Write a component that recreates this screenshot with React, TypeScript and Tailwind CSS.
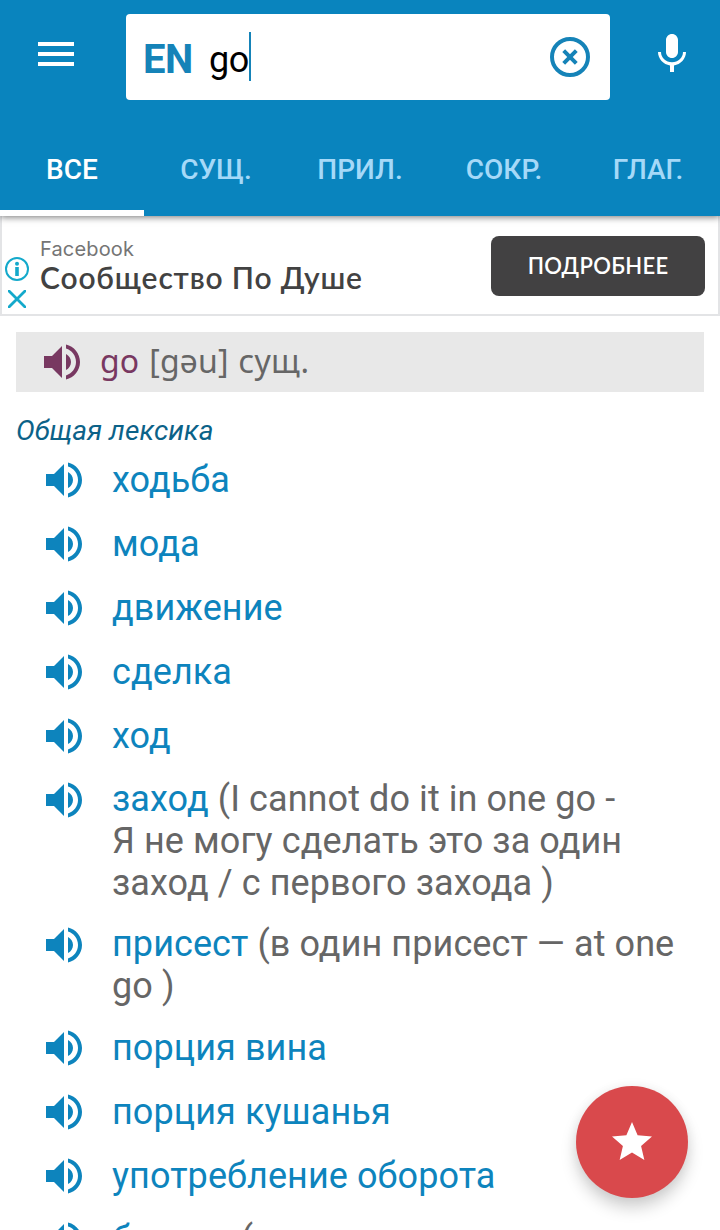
import { useState } from "react";
import { clsx } from "clsx";

interface Translation {
  word: string;
  note?: string;
}

const tabs = ["ВСЕ", "СУЩ.", "ПРИЛ.", "СОКР.", "ГЛАГ."];

const translations: Translation[] = [
  { word: "ходьба" },
  { word: "мода" },
  { word: "движение" },
  { word: "сделка" },
  { word: "ход" },
  {
    word: "заход",
    note: "(I cannot do it in one go -\nЯ не могу сделать это за один заход / с первого захода )",
  },
  { word: "присест", note: "(в один присест — at one go )" },
  { word: "порция вина" },
  { word: "порция кушанья" },
  { word: "употребление оборота" },
  { word: "бросок", note: "(в азартных играх, на скачках )" },
];

export default function App() {
  return (
    <main className="relative flex h-[1230px] w-[720px] flex-col overflow-hidden bg-white font-['Roboto','Noto_Sans',sans-serif]">
      <Header />
      <AdBanner />
      <WordHeading />
      <section className="mt-4 px-4">
        <h2 className="h-[40px] text-[28px] leading-[46px] tracking-[0.1px] text-[#0b6288] italic">
          Общая лексика
        </h2>
        <ul>
          {translations.map((item) => (
            <TranslationRow key={item.word} item={item} />
          ))}
        </ul>
      </section>
      <button
        aria-label="Add to favorites"
        className="absolute top-[1086px] left-[576px] flex size-28 items-center justify-center rounded-full bg-[#d9494c] shadow-[0_10px_16px_rgba(0,0,0,0.18),0_0_12px_rgba(0,0,0,0.06)]"
      >
        <svg viewBox="0 0 24 24" className="size-12 fill-white">
          <path d="M12 17.27L18.18 21l-1.64-7.03L22 9.24l-7.19-.61L12 2 9.19 8.63 2 9.24l5.46 4.73L5.82 21z" />
        </svg>
      </button>
    </main>
  );
}

function Header() {
  const [active, setActive] = useState(0);

  return (
    <header className="relative z-10 h-[216px] shrink-0 bg-[#0984be] shadow-[0_1px_7px_rgba(0,0,0,0.55)]">
      <div className="flex h-[122px] items-start pt-[14px]">
        <button aria-label="Menu" className="mt-7 ml-[38px] flex w-9 flex-col gap-[6px]">
          <span className="h-1 w-full bg-white" />
          <span className="h-1 w-full bg-white" />
          <span className="h-1 w-full bg-white" />
        </button>
        <div className="ml-[52px] flex h-[86px] w-[484px] items-center rounded-[4px] bg-white pr-5 pl-[17px]">
          <span className="mt-[5px] w-[49px] text-[40px] leading-[48px] font-bold tracking-[-0.4px] text-[#1583b8]">
            EN
          </span>
          <span className="mt-[5px] ml-[17px] w-[40px] text-[36px] leading-[48px] tracking-[-0.4px] text-black">
            go
          </span>
          <span className="-mt-px h-[49px] w-[2px] bg-[#1583b8]" />
          <button aria-label="Clear" className="ml-auto">
            <svg viewBox="0 0 40 40" className="size-10 fill-none stroke-[#1583b8]">
              <circle cx="20" cy="20" r="18" strokeWidth="4" />
              <path d="M13.7 13.7l12.6 12.6M26.3 13.7L13.7 26.3" strokeWidth="4" />
            </svg>
          </button>
        </div>
        <button aria-label="Voice search" className="mt-4 ml-[38px]">
          <svg viewBox="0 0 24 24" className="size-12 fill-white">
            <path d="M12 14c1.66 0 3-1.34 3-3V5c0-1.66-1.34-3-3-3S9 3.34 9 5v6c0 1.66 1.34 3 3 3zM17.5 11c0 3-2.44 5.1-5.5 5.1S6.5 14 6.5 11H5c0 3.41 2.72 6.23 6 6.72V21h2v-3.28c3.28-.48 6-3.3 6-6.72h-1.5z" />
          </svg>
        </button>
      </div>
      <nav className="grid h-[94px] grid-cols-5">
        {tabs.map((tab, i) => (
          <button
            key={tab}
            onClick={() => setActive(i)}
            className={clsx(
              "border-b-[6px] pt-2 text-[28px] font-medium",
              i === active ? "border-white text-white" : "border-transparent text-[#a5d9f8]"
            )}
          >
            {tab}
          </button>
        ))}
      </nav>
    </header>
  );
}

function AdBanner() {
  return (
    <aside className="flex h-[100px] shrink-0 items-center border-2 border-t-0 border-[#e3e4e6] pr-[13px] pl-[3px] font-['Lato','Noto_Sans',sans-serif]">
      <div className="mt-[34px] flex w-6 flex-col items-center gap-[9px]">
        <svg viewBox="0 0 24 24" className="size-6 fill-none stroke-[#14a9cb]">
          <circle cx="12" cy="12" r="11" strokeWidth="2" />
          <path d="M12 10v9" strokeWidth="3.6" />
          <circle cx="12" cy="6.8" r="2" className="fill-[#14a9cb] stroke-none" />
        </svg>
        <svg viewBox="0 0 18 18" className="size-[18px] fill-none stroke-[#14a9cb]">
          <path d="M0 0l18 18M18 0L0 18" strokeWidth="2.8" />
        </svg>
      </div>
      <div className="ml-[11px] flex flex-col">
        <span className="font-['Inter',sans-serif] text-[20px] leading-[24px] tracking-[0.15px] text-[#757575]">
          Facebook
        </span>
        <span className="text-[30px] leading-[33px] font-semibold tracking-[0.83px] text-[#424242]">
          Сообщество По Душе
        </span>
      </div>
      <button className="mt-[2px] ml-auto h-[60px] w-[214px] rounded-lg bg-[#424142] pb-px text-[22px] font-semibold tracking-[0.3px] text-white">
        ПОДРОБНЕЕ
      </button>
    </aside>
  );
}

function WordHeading() {
  return (
    <div className="mx-4 mt-4 flex h-[60px] shrink-0 items-center bg-[#e8e8e8] pl-[22px] font-['Noto_Sans',sans-serif] text-[32px] text-[#666]">
      <SpeakerIcon className="fill-[#783861]" />
      <p className="mb-[2px] ml-[14px] tracking-[0.15px] whitespace-pre [word-spacing:1.5px]">
        <span className="text-[#783861]">go</span> [gəu] сущ.
      </p>
    </div>
  );
}

function TranslationRow({ item }: { item: Translation }) {
  return (
    <li className="flex items-start py-2 pl-6">
      <SpeakerIcon className="fill-[#0d84bd]" />
      <p
        className={clsx(
          "ml-6 w-[576px] pb-px text-[36px] leading-[42px] tracking-[0.08px] whitespace-pre-line text-[#666]",
          item.note ? "pt-[2px]" : "pt-[3px]"
        )}
      >
        <span className="text-[#0d84bd]">{item.word}</span>
        {item.note && ` ${item.note}`}
      </p>
    </li>
  );
}

function SpeakerIcon({ className }: { className: string }) {
  return (
    <svg viewBox="0 0 24 24" className={clsx("size-12 shrink-0", className)}>
      <path d="M3 9v6h4l5 5V4L7 9H3zm13.5 3c0-1.77-1.02-3.29-2.5-4.03v8.05c1.48-.73 2.5-2.25 2.5-4.02zM14 3.23v2.06c2.89.86 5 3.54 5 6.71s-2.11 5.85-5 6.71v2.06c4.01-.91 7-4.49 7-8.77s-2.99-7.86-7-8.77z" />
    </svg>
  );
}
